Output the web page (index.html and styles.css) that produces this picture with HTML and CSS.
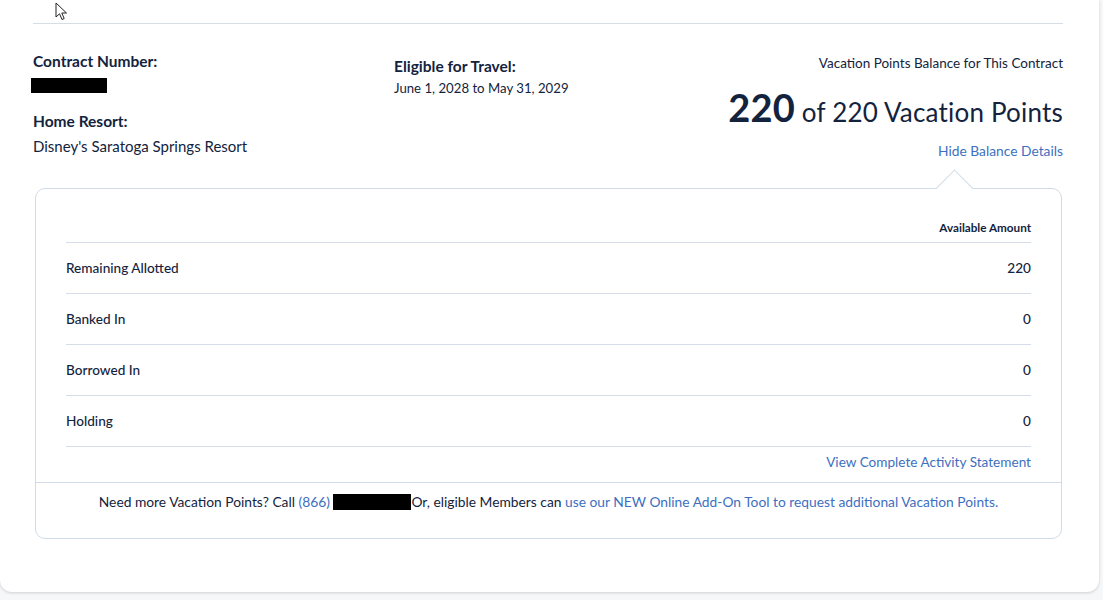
FILE: index.html
```html
<!DOCTYPE html>
<html lang="en">
<head>
<meta charset="utf-8">
<title>Vacation Points Balance</title>
<link rel="stylesheet" href="styles.css">
</head>
<body>
<div class="card">
  <div class="card-inner">
    <div class="summary">
      <div class="col col-contract">
        <h3 class="label">Contract Number:</h3>
        <div class="redacted redacted-contract"></div>
        <h3 class="label label-resort">Home Resort:</h3>
        <p class="value">Disney's Saratoga Springs Resort</p>
      </div>
      <div class="col col-travel">
        <h3 class="label">Eligible for Travel:</h3>
        <p class="value value-small">June 1, 2028 to May 31, 2029</p>
      </div>
      <div class="col col-balance">
        <p class="balance-caption">Vacation Points Balance for This Contract</p>
        <p class="balance-total"><strong>220</strong> of 220 Vacation Points</p>
        <a class="link balance-toggle" href="#">Hide Balance Details</a>
      </div>
    </div>

    <div class="details">
      <span class="notch"></span>
      <div class="details-body">
        <div class="row row-head">
          <span></span>
          <span class="amount-head">Available Amount</span>
        </div>
        <div class="row">
          <span>Remaining Allotted</span>
          <span>220</span>
        </div>
        <div class="row">
          <span>Banked In</span>
          <span>0</span>
        </div>
        <div class="row">
          <span>Borrowed In</span>
          <span>0</span>
        </div>
        <div class="row">
          <span>Holding</span>
          <span>0</span>
        </div>
        <div class="statement">
          <a class="link" href="#">View Complete Activity Statement</a>
        </div>
      </div>
      <div class="details-foot">
        Need more Vacation Points? Call <a class="link" href="#">(866)</a> <span class="redacted redacted-phone"></span>Or, eligible Members can <a class="link" href="#">use our NEW Online Add-On Tool to request additional Vacation Points.</a>
      </div>
    </div>
  </div>
</div>

<svg class="pointer" width="14" height="20" viewBox="0 0 14 20" aria-hidden="true">
  <path d="M1 1 L1 15 L4.5 11.8 L7 17.5 L9.2 16.5 L6.8 11 L11.5 11 Z" fill="#fff" stroke="#222" stroke-width="1" stroke-linejoin="miter"/>
</svg>
</body>
</html>
```

FILE: styles.css
```css
html, body {
  margin: 0;
  padding: 0;
}

body {
  background: #f6f7f8;
  font-family: Lato, "Open Sans", "Liberation Sans", sans-serif;
  color: #13233d;
  width: 1103px;
  height: 600px;
  overflow: hidden;
  position: relative;
}

.card {
  width: 1099px;
  height: 592px;
  background: #fff;
  border-radius: 0 0 12px 12px;
  box-shadow: 0 1px 3px rgba(20, 30, 50, 0.18);
  box-sizing: border-box;
  padding: 23px 36px 0 33px;
}

.card-inner {
  border-top: 1px solid #d5dde6;
}

/* contract summary: three columns */
.summary {
  display: grid;
  grid-template-columns: 361px 1fr auto;
  padding-top: 27px;
}

.label {
  margin: 0;
  font-size: 15.5px;
  line-height: 20px;
  font-weight: 700;
  color: #13233d;
}

.label-resort {
  margin-top: 18px;
}

.value {
  margin: 5px 0 0;
  font-size: 15px;
  line-height: 20px;
}

.value-small {
  font-size: 13.2px;
  line-height: 18px;
  margin-top: 3px;
}

.redacted {
  display: inline-block;
  background: #000;
}

.redacted-contract {
  display: block;
  width: 76px;
  height: 15px;
  margin: 7px 0 0 -2px;
}

.redacted-phone {
  width: 78px;
  height: 16px;
  vertical-align: -3px;
}

.col-travel {
  padding-top: 5px;
}

.col-balance {
  text-align: right;
  padding-top: 3px;
}

.balance-caption {
  margin: 0;
  font-size: 13.5px;
  line-height: 18px;
}

.balance-total {
  margin: 15px 0 0;
  font-size: 26px;
  line-height: 40px;
  letter-spacing: 0.2px;
}

.balance-total strong {
  font-size: 38px;
  font-weight: 700;
}

.link {
  color: #3e6fc0;
  text-decoration: none;
}

.balance-toggle {
  display: inline-block;
  margin-top: 10px;
  font-size: 13.8px;
  line-height: 18px;
}

/* balance details panel */
.details {
  position: relative;
  margin: 28px 1px 0 2px;
  border: 1px solid #cfdbe7;
  border-radius: 10px;
  background: #fff;
}

.notch {
  position: absolute;
  top: -14px;
  left: 905px;
  width: 26px;
  height: 26px;
  background: #fff;
  border-top: 1px solid #cfdbe7;
  border-left: 1px solid #cfdbe7;
  transform: rotate(45deg);
}

.details-body {
  padding: 0 30px 0 30px;
}

.row {
  display: flex;
  justify-content: space-between;
  align-items: center;
  height: 50px;
  border-bottom: 1px solid #d5dee8;
  font-size: 13.6px;
  font-weight: 500;
  color: #13233d;
}

.row-head {
  height: 53px;
  align-items: flex-end;
}

.amount-head {
  font-size: 11.7px;
  font-weight: 700;
  line-height: 18px;
  padding-bottom: 6px;
}

.statement {
  text-align: right;
  font-size: 13.6px;
  line-height: 18px;
  padding: 6px 0 11px;
}

.details-foot {
  border-top: 1px solid #cfdbe7;
  text-align: center;
  font-size: 13.8px;
  line-height: 20px;
  padding: 9px 0 26px;
}

.pointer {
  position: absolute;
  left: 55px;
  top: 2px;
}
```
